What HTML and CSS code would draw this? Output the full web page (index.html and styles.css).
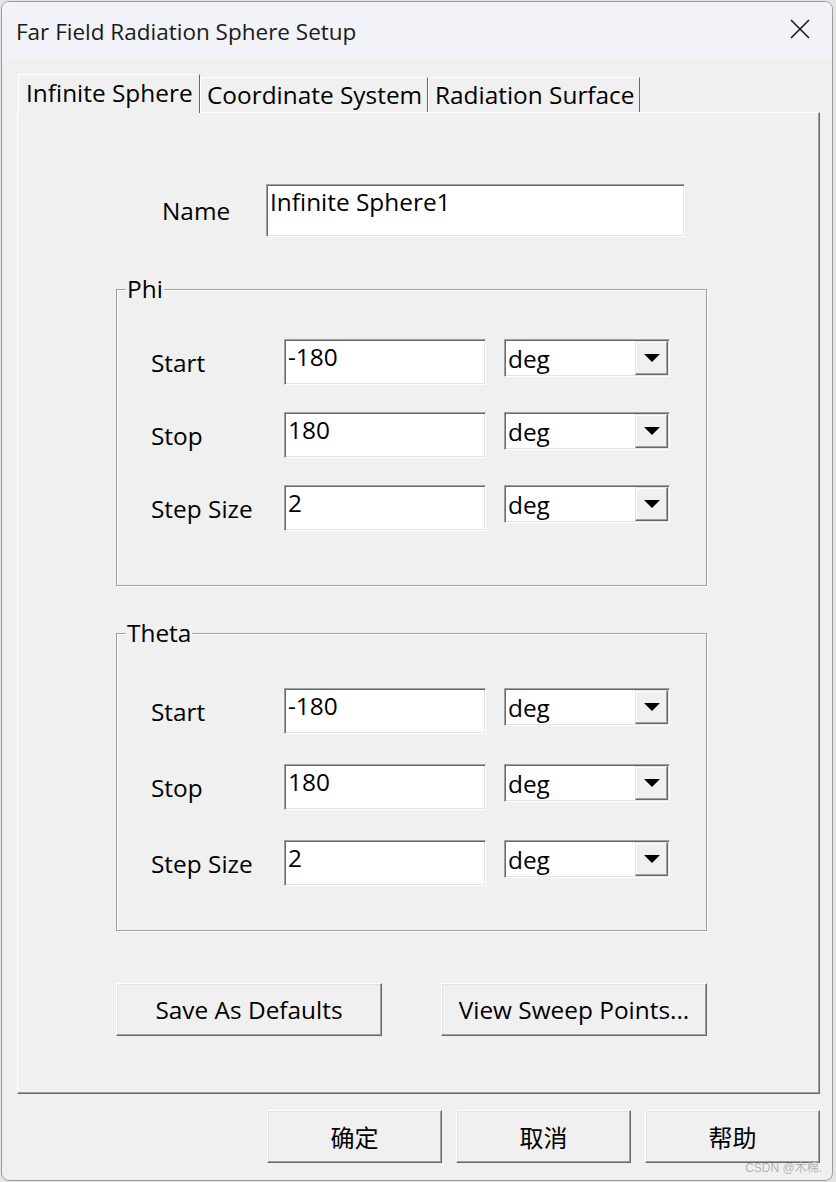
FILE: index.html
```html
<!DOCTYPE html>
<html lang="en">
<head>
<meta charset="utf-8">
<title>Far Field Radiation Sphere Setup</title>
<link rel="stylesheet" href="styles.css">
</head>
<body>
<div class="window">
  <div class="titlebar">
    <span class="title">Far Field Radiation Sphere Setup</span>
    <svg class="close" width="20" height="20" viewBox="0 0 20 20"><path d="M1 1 L19 19 M19 1 L1 19" stroke="#1a1a1a" stroke-width="1.6" fill="none"/></svg>
  </div>
  <div class="main">
    <div class="tabs">
      <div class="tab tab--active tab--w1">Infinite Sphere</div>
      <div class="tab tab--w2">Coordinate System</div>
      <div class="tab tab--w3">Radiation Surface</div>
    </div>
    <div class="panel">
      <div class="column">
        <div class="name-row">
          <span class="name-label">Name</span>
          <div class="field field--name">Infinite Sphere1</div>
        </div>

        <div class="group group--phi">
          <span class="legend">Phi</span>
          <div class="row">
            <span class="row-label">Start</span>
            <div class="field field--value">-180</div>
            <div class="combo"><span class="combo-text">deg</span><span class="combo-btn"><svg width="16" height="8" viewBox="0 0 16 8"><path d="M0 0 H16 L8 8 Z" fill="#000"/></svg></span></div>
          </div>
          <div class="row">
            <span class="row-label">Stop</span>
            <div class="field field--value">180</div>
            <div class="combo"><span class="combo-text">deg</span><span class="combo-btn"><svg width="16" height="8" viewBox="0 0 16 8"><path d="M0 0 H16 L8 8 Z" fill="#000"/></svg></span></div>
          </div>
          <div class="row">
            <span class="row-label">Step Size</span>
            <div class="field field--value">2</div>
            <div class="combo"><span class="combo-text">deg</span><span class="combo-btn"><svg width="16" height="8" viewBox="0 0 16 8"><path d="M0 0 H16 L8 8 Z" fill="#000"/></svg></span></div>
          </div>
        </div>

        <div class="group group--theta">
          <span class="legend">Theta</span>
          <div class="row">
            <span class="row-label">Start</span>
            <div class="field field--value">-180</div>
            <div class="combo"><span class="combo-text">deg</span><span class="combo-btn"><svg width="16" height="8" viewBox="0 0 16 8"><path d="M0 0 H16 L8 8 Z" fill="#000"/></svg></span></div>
          </div>
          <div class="row">
            <span class="row-label">Stop</span>
            <div class="field field--value">180</div>
            <div class="combo"><span class="combo-text">deg</span><span class="combo-btn"><svg width="16" height="8" viewBox="0 0 16 8"><path d="M0 0 H16 L8 8 Z" fill="#000"/></svg></span></div>
          </div>
          <div class="row">
            <span class="row-label">Step Size</span>
            <div class="field field--value">2</div>
            <div class="combo"><span class="combo-text">deg</span><span class="combo-btn"><svg width="16" height="8" viewBox="0 0 16 8"><path d="M0 0 H16 L8 8 Z" fill="#000"/></svg></span></div>
          </div>
        </div>

        <div class="actions">
          <div class="button button--wide">Save As Defaults</div>
          <div class="button button--wide">View Sweep Points...</div>
        </div>
      </div>
    </div>
    <div class="footer">
      <div class="button button--cjk">确定</div>
      <div class="button button--cjk">取消</div>
      <div class="button button--cjk">帮助</div>
    </div>
    <span class="watermark">CSDN @木棉.</span>
  </div>
</div>
</body>
</html>
```
FILE: styles.css
```css
* { box-sizing: border-box; }

html, body {
  margin: 0;
  padding: 0;
  background: #e4e4e4;
}

body {
  width: 836px;
  height: 1182px;
  overflow: hidden;
  font-family: "Open Sans", "Noto Sans CJK SC", sans-serif;
  color: #000;
}

.window {
  margin: 1px 0 0 1px;
  width: 832px;
  height: 1180px;
  border: 1px solid #9c9c9c;
  border-radius: 8px;
  overflow: hidden;
  display: flex;
  flex-direction: column;
  background: #f0f0f0;
}

.titlebar {
  height: 56px;
  flex: none;
  display: flex;
  align-items: center;
  justify-content: space-between;
  padding: 2px 22px 0 14px;
  background: #f1f3f8;
}

.title {
  font-size: 22.5px;
  color: #1a1a1a;
}

.close { display: block; margin-top: -4px; }

.main {
  position: relative;
  flex: 1;
  display: flex;
  flex-direction: column;
  padding: 16px 12px 0 15px;
}

.tabs {
  display: flex;
  align-items: flex-end;
  height: 38px;
  padding-left: 1px;
}

.tab {
  height: 35px;
  font-size: 24.4px;
  line-height: 33px;
  padding: 0 6px;
  white-space: nowrap;
  border-top: 1px solid #fff;
  border-left: 1px solid #fff;
  border-right: 1px solid #696969;
}

.tab--active {
  line-height: 36px;
  padding-left: 7px;
  position: relative;
  z-index: 1;
  margin-bottom: -1px;
  height: 39px;
  background: #f0f0f0;
}

.tab--w1 { width: 182px; }
.tab--w2 { width: 228px; }
.tab--w3 { width: 212px; }

.panel {
  width: 803px;
  height: 982px;
  flex: none;
  border-top: 1px solid #fff;
  border-left: 1px solid #fff;
  border-right: 1px solid #696969;
  border-bottom: 1px solid #696969;
  box-shadow: inset -1px -1px 0 #a0a0a0;
  padding: 71px 0 0 98px;
}

.column {
  width: 591px;
  display: flex;
  flex-direction: column;
}

.name-row {
  display: flex;
  align-items: center;
  height: 53px;
}

.name-label {
  width: 150px;
  padding-left: 46px;
  font-size: 24.4px;
}

.field {
  background: #fff;
  border-top: 1px solid #a0a0a0;
  border-left: 1px solid #a0a0a0;
  border-right: 1px solid #fff;
  border-bottom: 1px solid #fff;
  box-shadow: inset 1px 1px 0 #696969, inset -1px -1px 0 #e3e3e3;
  font-size: 24.4px;
  padding: 1px 3px 0 3px;
  line-height: 32px;
  white-space: nowrap;
}

.field--name {
  width: 419px;
  height: 53px;
}

.field--value {
  width: 202px;
  height: 46px;
}

.group {
  position: relative;
  border: 1px solid #a0a0a0;
  box-shadow: 1px 1px 0 #fff, inset 1px 1px 0 #fff;
  display: flex;
  flex-direction: column;
  padding-left: 34px;
}

.group--phi {
  margin-top: 52px;
  height: 297px;
  padding-top: 49px;
  gap: 27px;
}

.group--theta {
  margin-top: 47px;
  height: 298px;
  padding-top: 54px;
  gap: 30px;
}

.legend {
  position: absolute;
  top: -18px;
  left: 9px;
  padding: 0 1px;
  background: #f0f0f0;
  font-size: 24.4px;
  line-height: 34px;
}

.row {
  display: flex;
  align-items: flex-start;
  height: 46px;
}

.row-label {
  width: 133px;
  font-size: 24.4px;
  line-height: 48px;
  white-space: nowrap;
}

.combo {
  margin-left: 18px;
  width: 166px;
  height: 38px;
  display: flex;
  background: #fff;
  border-top: 1px solid #a0a0a0;
  border-left: 1px solid #a0a0a0;
  border-right: 1px solid #fff;
  border-bottom: 1px solid #fff;
  box-shadow: inset 1px 1px 0 #696969, inset -1px -1px 0 #e3e3e3;
  padding: 1px 1px 1px 3px;
}

.combo-text {
  flex: 1;
  font-size: 24.4px;
  line-height: 36px;
}

.combo-btn {
  width: 33px;
  height: 34px;
  display: flex;
  align-items: center;
  justify-content: center;
  background: #f0f0f0;
  border-top: 1px solid #e3e3e3;
  border-left: 1px solid #e3e3e3;
  border-right: 1px solid #696969;
  border-bottom: 1px solid #696969;
  box-shadow: inset -1px -1px 0 #a0a0a0, inset 1px 1px 0 #fff;
}

.combo-btn svg { display: block; }

.actions {
  margin-top: 52px;
  display: flex;
  justify-content: space-between;
}

.button {
  height: 53px;
  display: flex;
  align-items: center;
  justify-content: center;
  background: #f0f0f0;
  border-top: 1px solid #fff;
  border-left: 1px solid #fff;
  border-right: 1px solid #696969;
  border-bottom: 1px solid #696969;
  box-shadow: inset -1px -1px 0 #a0a0a0, inset 1px 1px 0 #e3e3e3;
  font-size: 24.4px;
  white-space: nowrap;
}

.button--wide { width: 266px; }

.footer {
  margin-top: 16px;
  display: flex;
  justify-content: flex-end;
  gap: 14px;
}

.button--cjk {
  width: 175px;
  font-family: "Noto Sans CJK SC", sans-serif;
  font-size: 24px;
}

.watermark {
  position: absolute;
  right: 10px;
  bottom: 5px;
  font-family: "Liberation Sans", "Noto Sans CJK SC", sans-serif;
  font-size: 12px;
  color: #b4b4b4;
  line-height: 14px;
}
```
